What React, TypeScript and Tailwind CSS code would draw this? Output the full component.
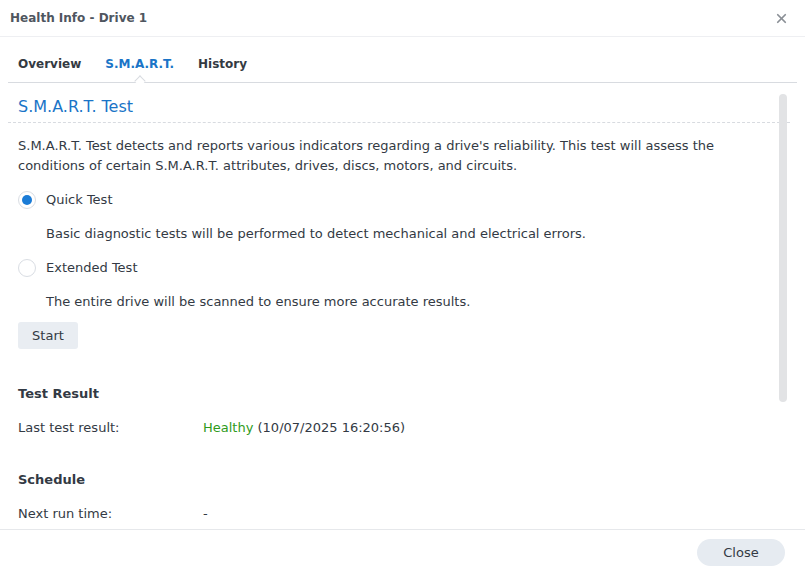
import { X } from "lucide-react";

const font = { fontFamily: '"DejaVu Sans", Verdana, sans-serif' };

function Radio({ checked }: { checked: boolean }) {
  return (
    <span className="flex h-[18px] w-[18px] items-center justify-center rounded-full border border-[#d9dde3] bg-white">
      {checked && <span className="h-[10px] w-[10px] rounded-full bg-[#1a7bd6]" />}
    </span>
  );
}

export default function App() {
  return (
    <div className="flex h-[574px] w-[805px] flex-col bg-white text-[13px] text-[#333a44]" style={font}>
      {/* title bar */}
      <div className="flex h-[37px] shrink-0 items-center justify-between border-b border-[#eeeff2] pl-[10px] pr-[16px]">
        <span className="text-[12px] font-bold text-[#4f5660]">Health Info - Drive 1</span>
        <X size={15} strokeWidth={2.8} className="text-[#8a8f96]" />
      </div>

      {/* tabs */}
      <div className="mx-[8px] flex h-[46px] shrink-0 items-center gap-[24px] border-b border-[#d8dbe0] px-[10px] pt-[8px] text-[12px] font-bold">
        <span className="text-[#343a42]">Overview</span>
        <span className="relative text-[#1a74c7]">
          S.M.A.R.T.
          <span className="absolute left-1/2 top-[22px] h-[8px] w-[8px] -translate-x-1/2 rotate-45 border-l border-t border-[#d8dbe0] bg-white" />
        </span>
        <span className="text-[#343a42]">History</span>
      </div>

      {/* body */}
      <div className="relative flex-1 overflow-hidden">
        <div className="mx-[8px] mr-[15px]">
          <div className="flex h-[40px] items-end border-b border-dashed border-[#d8dbe0] px-[10px] pb-[3px] text-[16px] text-[#1a74c7]">
            S.M.A.R.T. Test
          </div>
          <div className="px-[10px]">
            <p className="mt-[13px] leading-[20px]">
              S.M.A.R.T. Test detects and reports various indicators regarding a drive's reliability. This test will assess the conditions of certain S.M.A.R.T. attributes, drives, discs, motors, and circuits.
            </p>
            <div className="mt-[14px] flex h-[20px] items-center gap-[10px]">
              <Radio checked />
              <span>Quick Test</span>
            </div>
            <p className="mt-[14px] pl-[28px] leading-[20px]">
              Basic diagnostic tests will be performed to detect mechanical and electrical errors.
            </p>
            <div className="mt-[14px] flex h-[20px] items-center gap-[10px]">
              <Radio checked={false} />
              <span>Extended Test</span>
            </div>
            <p className="mt-[14px] pl-[28px] leading-[20px]">
              The entire drive will be scanned to ensure more accurate results.
            </p>
            <button className="mt-[10px] flex h-[27px] w-[60px] items-center justify-center rounded-[3px] bg-[#e9edf2] text-[13px] text-[#333a44]">
              Start
            </button>

            <div className="mt-[35px] h-[20px] text-[13px] font-bold leading-[20px]">Test Result</div>
            <div className="mt-[14px] flex h-[20px] items-center">
              <span className="w-[185px]">Last test result:</span>
              <span>
                <span className="text-[#2f9b1c]">Healthy</span> (10/07/2025 16:20:56)
              </span>
            </div>

            <div className="mt-[32px] h-[20px] text-[13px] font-bold leading-[20px]">Schedule</div>
            <div className="mt-[14px] flex h-[20px] items-center">
              <span className="w-[185px]">Next run time:</span>
              <span>-</span>
            </div>
          </div>
        </div>
        {/* scrollbar */}
        <div className="absolute right-[18px] top-[11px] h-[308px] w-[8px] rounded-full bg-[#e2e3e5]" />
      </div>

      {/* footer */}
      <div className="flex h-[45px] shrink-0 items-center justify-end border-t border-[#e6e8eb] pr-[20px] pt-[1px]">
        <button className="flex h-[27px] w-[88px] items-center justify-center rounded-full bg-[#e6ebf1] text-[13px] text-[#333a44]">
          Close
        </button>
      </div>
    </div>
  );
}
